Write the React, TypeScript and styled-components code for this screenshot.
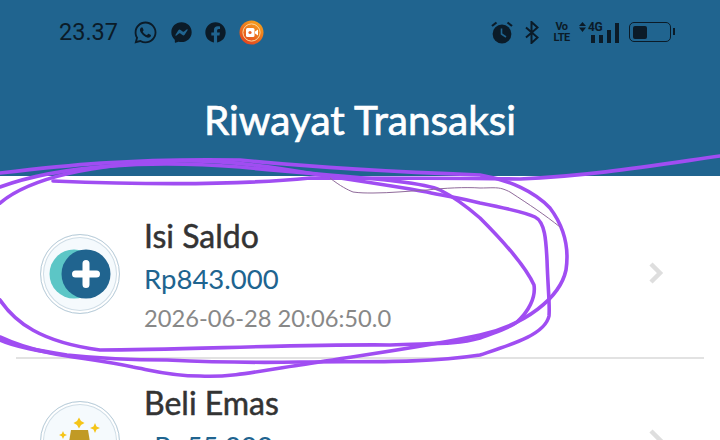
import styled, { createGlobalStyle } from "styled-components"
import { FaFacebook, FaFacebookMessenger, FaWhatsapp } from "react-icons/fa"

const GlobalStyle = createGlobalStyle`
    html, body {
        margin: 0;
        padding: 0;
        background: #ffffff;
        font-family: Lato, "Open Sans", sans-serif;
    }
`

function RecorderIcon() {
    return (
        <svg width="25" height="25" viewBox="0 0 25 25">
            <defs>
                <linearGradient id="rec" x1="0.8" y1="0" x2="0.2" y2="1">
                    <stop offset="0" stopColor="#f7a51c" />
                    <stop offset="1" stopColor="#e2401f" />
                </linearGradient>
            </defs>
            <circle cx="12.5" cy="12.5" r="12" fill="url(#rec)" />
            <circle cx="12.5" cy="12.5" r="8.6" fill="none" stroke="#fbd9a0" strokeWidth="1" />
            <rect x="7" y="8" width="8.5" height="9" rx="1.5" fill="#fff" />
            <path d="M16 11.5 L19 9.5 V15.5 L16 13.5 Z" fill="#fff" />
            <circle cx="11" cy="12.5" r="1.6" fill="#e8642a" />
        </svg>
    )
}

function AlarmIcon() {
    return (
        <svg width="24" height="23" viewBox="0 0 24 23">
            <circle cx="11" cy="13" r="9.4" fill="#0b1b28" />
            <path d="M10.5 7.5 V13 L15 16" fill="none" stroke="#20648f" strokeWidth="1.6" />
            <path d="M1 5 L5.5 1.5" stroke="#0b1b28" strokeWidth="2.2" fill="none" />
            <path d="M21 5 L16.5 1.5" stroke="#0b1b28" strokeWidth="2.2" fill="none" />
        </svg>
    )
}

function BluetoothIcon() {
    return (
        <svg width="14" height="23" viewBox="0 0 14 23">
            <path d="M1 6.5 L12.5 16.5 L6.5 22 V1 L12.5 6.5 L1 16.5" fill="none" stroke="#0b1b28" strokeWidth="2" />
        </svg>
    )
}

function NetArrows() {
    return (
        <svg width="7" height="10" viewBox="0 0 7 10">
            <path d="M3.5 0 L7 4 H0 Z M0 5.5 H7 L3.5 10 Z" fill="#0b1b28" />
        </svg>
    )
}

function Signal() {
    const bars = [8, 8, 13, 20]
    return (
        <SignalBars>
            {bars.map((height, i) => <SignalBar key={i} $height={height} />)}
        </SignalBars>
    )
}

function SaldoIcon() {
    return (
        <IconRing>
            <svg width="62" height="50" viewBox="0 0 62 50">
                <circle cx="25" cy="25" r="24.5" fill="#5cc6c6" />
                <circle cx="37" cy="25" r="24.5" fill="#20648f" />
                <path d="M37 14.5 V35.5 M26.5 25 H47.5" stroke="#fff" strokeWidth="7" strokeLinecap="round" />
            </svg>
        </IconRing>
    )
}

function EmasIcon() {
    return (
        <IconRing>
            <svg width="62" height="62" viewBox="0 0 62 62">
                <path d="M22 20 H39 L44 50 H17 Z" fill="#c19a25" />
                <path d="M30 7.5 L32 11 L35.5 13 L32 15 L30 18.5 L28 15 L24.5 13 L28 11 Z" fill="#f5c518" />
                <path d="M46 13 L47.5 16.5 L51 18 L47.5 19.5 L46 23 L44.5 19.5 L41 18 L44.5 16.5 Z" fill="#f5c518" />
                <path d="M14 21 L15.2 23.8 L18 25 L15.2 26.2 L14 29 L12.8 26.2 L10 25 L12.8 23.8 Z" fill="#f5c518" />
            </svg>
        </IconRing>
    )
}

function ChevronIcon() {
    return (
        <ChevronWrap>
            <svg width="16" height="24" viewBox="0 0 16 24">
                <path d="M3 3 L12 12 L3 21" fill="none" stroke="#dedede" strokeWidth="4.5" />
            </svg>
        </ChevronWrap>
    )
}

function Scribble() {
    return (
        <ScribbleLayer viewBox="0 0 720 440">
            <g fill="none" stroke="#a04df2" strokeWidth="3.6" strokeLinecap="round" strokeLinejoin="round">
                <path d="M720 156 C650 166 590 176 520 179 C450 178 380 178 310 178 C230 186 130 184 53 181" />
                <path d="M0 173 C60 166 130 158 240 160 C320 168 400 172 480 175 C510 180 535 192 550 208 C565 228 569 250 566 270 C560 298 525 325 480 335 C420 348 360 355 300 365 C265 370 230 378 200 376 C170 376 150 370 133 367 C100 360 75 358 50 353 C30 349 15 344 0 337" />
                <path d="M0 203 C30 178 90 164 180 161 C230 160 280 168 320 175 C360 181 400 187 427 192 C445 196 460 198 480 203 C500 207 525 212 535 217 C545 222 546 240 547 260 C548 290 550 305 549 316 C545 335 510 345 480 355 C420 364 360 361 300 362 C250 363 210 362 167 360 C130 360 95 358 67 355 C40 351 15 347 0 340" />
                <path d="M0 300 C15 322 40 342 100 350 C180 350 300 344 390 345 C430 343 455 345 480 338 C495 332 510 328 517 322 C528 312 536 298 534 285 C525 265 497 235 480 218 C465 205 450 195 440 190 C420 180 330 176 240 167 C150 160 60 165 0 187" />
            </g>
            <path d="M330 178 C340 186 348 190 353 192 C360 193 366 193 373 193 C390 193 410 191 427 190 C445 188 465 187 480 188 C490 188 497 187 503 189 C506 190 508 191 510 192 C530 205 545 215 560 227" fill="none" stroke="#8f6a9a" strokeWidth="1" />
        </ScribbleLayer>
    )
}

export default function App() {
    return (
        <Screen>
            <GlobalStyle />
            <Header>
                <StatusBar>
                    <StatusLeft>
                        <Time>23.37</Time>
                        <FaWhatsapp size={25} />
                        <FaFacebookMessenger size={21} />
                        <FaFacebook size={21} />
                        <RecorderIcon />
                    </StatusLeft>
                    <StatusRight>
                        <AlarmIcon />
                        <BluetoothIcon />
                        <VoLte>
                            <span>Vo</span>
                            <span>LTE</span>
                        </VoLte>
                        <NetGroup>
                            <NetTop>
                                <NetArrows />
                                <NetLabel>4G</NetLabel>
                            </NetTop>
                            <Signal />
                        </NetGroup>
                        <Battery>
                            <BatteryFill />
                        </Battery>
                    </StatusRight>
                </StatusBar>
                <Title>Riwayat Transaksi</Title>
            </Header>
            <List>
                <Row>
                    <SaldoIcon />
                    <RowText>
                        <RowTitle>Isi Saldo</RowTitle>
                        <Amount>Rp843.000</Amount>
                        <DateText>2026-06-28 20:06:50.0</DateText>
                    </RowText>
                    <ChevronIcon />
                </Row>
                <Row>
                    <EmasIcon />
                    <RowText>
                        <RowTitle>Beli Emas</RowTitle>
                        <Amount>-Rp55.000</Amount>
                        <DateText>2026-06-28 20:06:50.0</DateText>
                    </RowText>
                    <ChevronIcon />
                </Row>
            </List>
            <Scribble />
        </Screen>
    )
}

const Screen = styled.div`
    position: relative;
    width: 720px;
    height: 440px;
    overflow: hidden;
    background: #ffffff;
`

const Header = styled.header`
    height: 176px;
    background: #20648f;
    display: flex;
    flex-direction: column;
    color: #0b1b28;
`

const StatusBar = styled.div`
    height: 64px;
    padding: 0 46px 0 59px;
    display: flex;
    align-items: center;
    justify-content: space-between;
`

const StatusLeft = styled.div`
    display: flex;
    align-items: center;
    gap: 13px;
`

const StatusRight = styled.div`
    display: flex;
    align-items: center;
    gap: 10px;
`

const Time = styled.span`
    font-family: Roboto, sans-serif;
    font-size: 23.5px;
    font-weight: 400;
    margin-right: 2px;
`

const VoLte = styled.div`
    width: 15px;
    margin-left: 5px;
    display: flex;
    flex-direction: column;
    align-items: center;
    font-family: Roboto, sans-serif;
    font-size: 11px;
    font-weight: 700;
    line-height: 11px;
    letter-spacing: -0.6px;
`

const NetGroup = styled.div`
    position: relative;
    width: 40px;
    height: 21px;
    display: flex;
    justify-content: flex-end;
    align-items: flex-end;
`

const NetTop = styled.div`
    position: absolute;
    left: 0;
    top: 0;
    display: flex;
    align-items: center;
    gap: 2px;
`

const NetLabel = styled.span`
    font-family: Roboto, sans-serif;
    font-size: 12px;
    font-weight: 700;
    line-height: 10px;
    letter-spacing: -0.5px;
`

const SignalBars = styled.div`
    display: flex;
    align-items: flex-end;
    gap: 4px;
`

const SignalBar = styled.div<{ $height: number }>`
    width: 4px;
    height: ${p => p.$height}px;
    background: #0b1b28;
`

const Battery = styled.div`
    width: 42px;
    height: 20px;
    box-sizing: border-box;
    margin-right: 3px;
    border: 1.5px solid #0b1b28;
    border-radius: 5px;
    padding: 2.5px;
    position: relative;

    &::after {
        content: "";
        position: absolute;
        right: -5px;
        top: 5px;
        width: 2px;
        height: 7px;
        background: #0b1b28;
    }
`

const BatteryFill = styled.div`
    width: 14px;
    height: 100%;
    background: #0b1b28;
    border-radius: 2px;
`

const Title = styled.h1`
    margin: 0;
    padding-top: 30px;
    text-align: center;
    font-size: 40.5px;
    line-height: 52px;
    font-weight: 400;
    -webkit-text-stroke: 0.7px #ffffff;
    color: #ffffff;
`

const List = styled.div`
    padding: 16px 16px 0;
    display: flex;
    flex-direction: column;
`

const Row = styled.div`
    height: 167px;
    flex: none;
    padding: 0 40px 0 24px;
    display: flex;
    align-items: center;
    border-bottom: 2px solid #e2e2e2;
    box-sizing: border-box;
`

const IconRing = styled.div`
    width: 80px;
    height: 80px;
    flex: none;
    margin-bottom: 1px;
    box-sizing: border-box;
    border-radius: 50%;
    border: 1.5px solid #b8ccd9;
    box-shadow: inset 0 0 0 2px #fff, inset 0 0 0 3px #cfdde6;
    background: #f5fafd;
    display: flex;
    align-items: center;
    justify-content: center;
`

const RowText = styled.div`
    flex: 1;
    margin-left: 24px;
    display: flex;
    flex-direction: column;
`

const RowTitle = styled.div`
    font-size: 32px;
    font-weight: 400;
    -webkit-text-stroke: 0.5px #333333;
    line-height: 45px;
    color: #333333;
`

const Amount = styled.div`
    font-size: 27.5px;
    line-height: 41px;
    color: #20648f;
`

const DateText = styled.div`
    font-size: 23.7px;
    line-height: 38px;
    color: #888888;
`

const ChevronWrap = styled.div`
    display: flex;
    margin-bottom: 3px;
`

const ScribbleLayer = styled.svg`
    position: absolute;
    left: 0;
    top: 0;
    width: 720px;
    height: 440px;
    pointer-events: none;
`
